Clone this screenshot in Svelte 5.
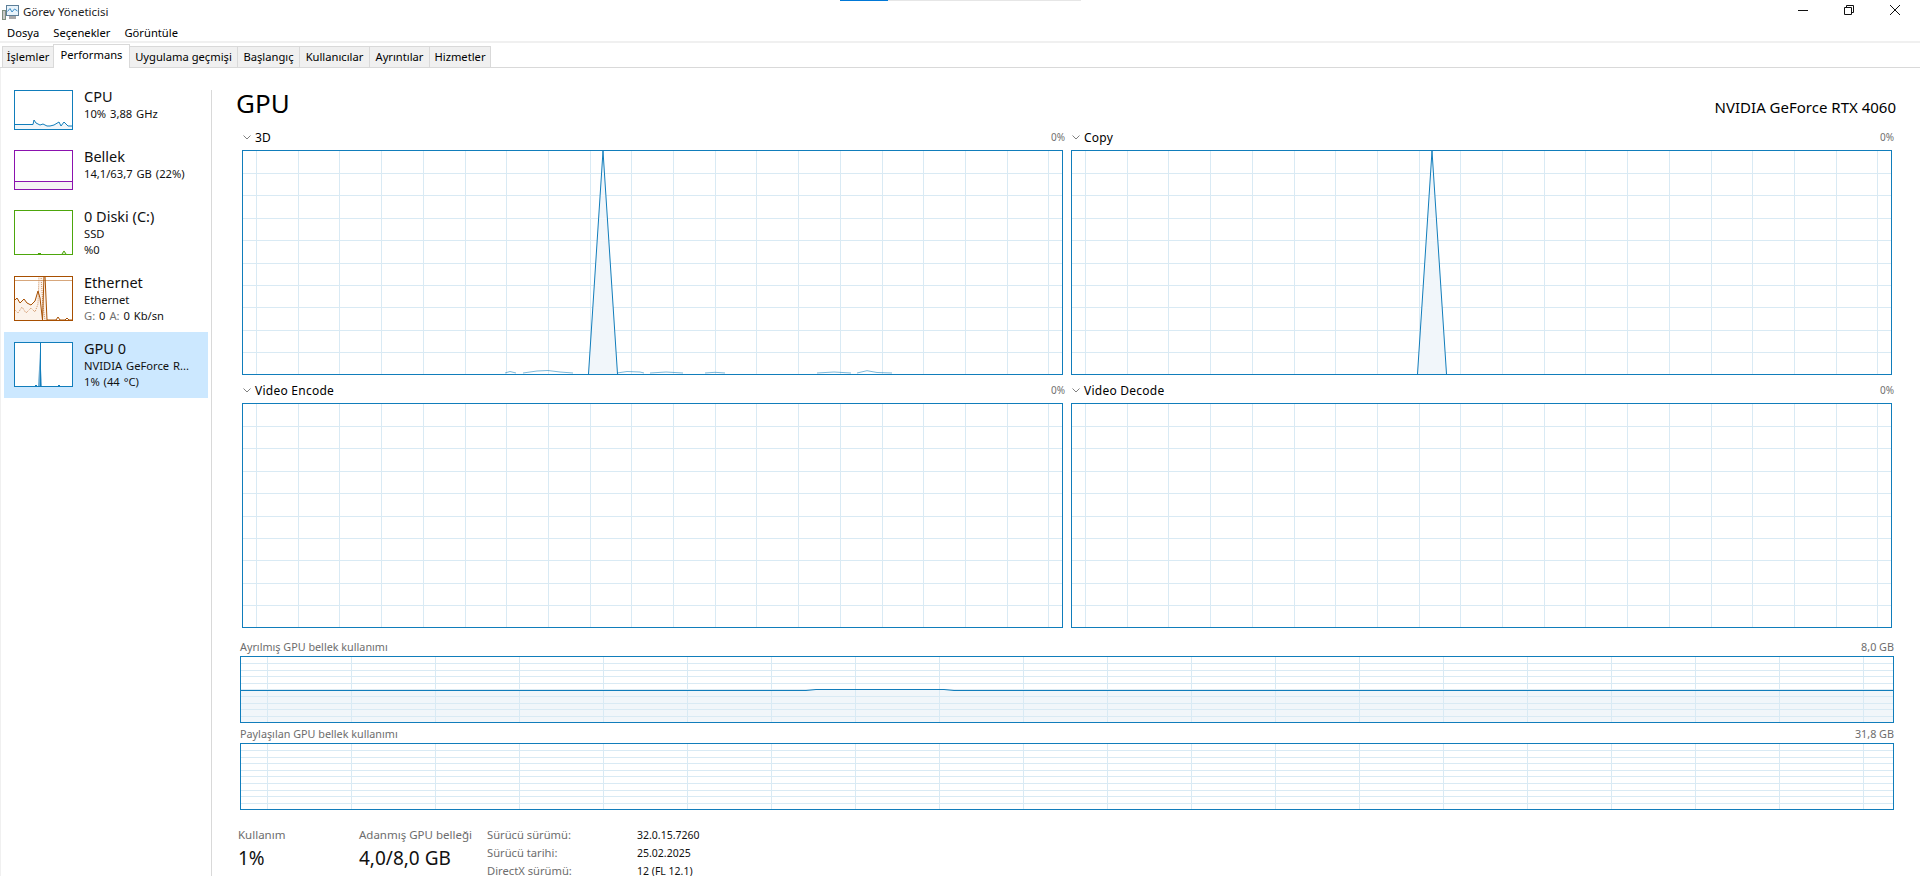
<script>
  const tabs = ['İşlemler', 'Performans', 'Uygulama geçmişi', 'Başlangıç', 'Kullanıcılar', 'Ayrıntılar', 'Hizmetler'];
  const range = (n, f) => Array.from({ length: n }, (_, i) => f(i));

  const spike3d = 'M263,223 L268,221.5 L274,223 M281,223 L295,221 L306,220.5 L318,222 L331,223 M375,223 L385,221.5 L398,222 L402,223 M408,223 L424,222 L441,223 M463,223 L473,222.3 L483,223 M575,223 L592,222 L609,223 M615,223 L625,220.7 L635,222.5 L650,223';
</script>

{#snippet bigChart(spike, fill)}
  <svg class="chart big" viewBox="0 0 821 225" preserveAspectRatio="none">
    {#each range(20, (i) => 14 + i * 41.7) as x}
      <line class="grid" x1={Math.round(x) + 0.5} x2={Math.round(x) + 0.5} y1="0" y2="225" />
    {/each}
    {#each range(9, (i) => 23 + i * 22.4) as y}
      <line class="grid" y1={Math.round(y) + 0.5} y2={Math.round(y) + 0.5} x1="0" x2="821" />
    {/each}
    {#if fill}
      <polygon class="area" points="346.5,224 361,1 375.5,224" />
      <polyline class="data" points="346.5,224 361,1 375.5,224" />
    {/if}
    {#if spike}
      <path class="data thin" d={spike} />
    {/if}
    <rect class="frame" x="0.5" y="0.5" width="820" height="224" />
  </svg>
{/snippet}

{#snippet smallChart(level)}
  <svg class="chart small" viewBox="0 0 1654 67" preserveAspectRatio="none">
    {#if level}
      <rect class="area" x="0" y={level} width="1654" height={67 - level} />
    {/if}
    {#each range(20, (i) => 28 + i * 84) as x}
      <line class="grid" x1={x - 0.5} x2={x - 0.5} y1="0" y2="67" />
    {/each}
    {#each range(9, (i) => 7 + i * 6.6) as y}
      <line class="grid" y1={Math.round(y) + 0.5} y2={Math.round(y) + 0.5} x1="0" x2="1654" />
    {/each}
    {#if level}
      <path class="data" d="M0,34.5 H566 L576,33.5 H704 L714,34.5 H1654" />
    {/if}
    <rect class="frame" x="0.5" y="0.5" width="1653" height="66" />
  </svg>
{/snippet}

{#snippet chevron()}
  <svg class="chev" viewBox="0 0 8 5"><path d="M0.5,0.5 L4,4 L7.5,0.5" /></svg>
{/snippet}

<div class="progress"><span class="done"></span><span class="rest"></span></div>

<div class="window">
  <header class="titlebar">
    <svg class="appicon" viewBox="0 0 17 16">
      <rect x="0.5" y="6.5" width="3" height="9" fill="#c9c9c9" stroke="#7f8f7f" />
      <rect x="4.5" y="1.5" width="12" height="10" fill="#e8f3fb" stroke="#5d7f99" />
      <path d="M5.5,7.5 L8,4.5 L10,8 L12.5,5 L15.5,7" fill="none" stroke="#3c8dc5" />
      <rect x="7" y="12" width="7" height="3" fill="#a8a8a8" />
    </svg>
    <span class="title">Görev Yöneticisi</span>
    <div class="winbtns">
      <svg viewBox="0 0 10 10"><path d="M0,5.5 H10" /></svg>
      <svg viewBox="0 0 10 10"><path d="M0.5,2.5 H7.5 V9.5 H0.5 Z M2.5,2.5 V0.5 H9.5 V7.5 H7.5" /></svg>
      <svg viewBox="0 0 10 10"><path d="M0,0 L10,10 M10,0 L0,10" /></svg>
    </div>
  </header>

  <nav class="menu">
    <span>Dosya</span><span>Seçenekler</span><span>Görüntüle</span>
  </nav>
  <div class="band"></div>

  <div class="tabs">
    {#each tabs as t, i}
      <span class="tab" class:active={i === 1}>{t}</span>
    {/each}
  </div>

  <main class="body">
    <aside class="side">
      <div class="item short">
        <svg class="thumb t40 blue" viewBox="0 0 59 40">
          <path class="tfill" d="M0,34 H19 L20,30 L22,33 L26,35 L29,34 L33,36 L36,36 L40,35 L45,32 L47,36 L50,32 L54,36 L59,36 V40 H0 Z" />
          <path class="tline" d="M0,34.5 H19 L20,30 L22,33 L26,35 L29,34 L33,36 L36,36 L40,35 L45,32 L47,36 L50,32 L54,36 L59,36" />
          <rect class="tframe" x="0.5" y="0.5" width="58" height="39" />
        </svg>
        <div class="info">
          <div class="name">CPU</div>
          <div class="sub">10% 3,88 GHz</div>
        </div>
      </div>

      <div class="item short">
        <svg class="thumb t40 purple" viewBox="0 0 59 40">
          <rect class="tfill" x="0" y="31" width="59" height="9" />
          <path class="tline" d="M0,31.5 H59" />
          <rect class="tframe" x="0.5" y="0.5" width="58" height="39" />
        </svg>
        <div class="info">
          <div class="name">Bellek</div>
          <div class="sub">14,1/63,7 GB (22%)</div>
        </div>
      </div>

      <div class="item">
        <svg class="thumb green" viewBox="0 0 59 45">
          <path class="tfill" d="M23,44 L25,43 L27,44 Z M48,44 L50,40 L52,44 Z" />
          <path class="tline" d="M24,43.5 H27 M48,44 L50,41 L52,44" />
          <rect class="tframe" x="0.5" y="0.5" width="58" height="44" />
        </svg>
        <div class="info">
          <div class="name">0 Diski (C:)</div>
          <div class="sub">SSD</div>
          <div class="sub">%0</div>
        </div>
      </div>

      <div class="item eth">
        <svg class="thumb orange" viewBox="0 0 59 45">
          <path class="tfill" d="M0,25 L3,22 L6,27 L10,23 L13,27 L17,29 L21,25 L24,15 L26,0 L30,0 L33,44 H59 V45 H0 Z" />
          <path class="tline faint" d="M0,4.5 H59" />
          <path class="tline dots" d="M0,33 L4,37 L8,31 L12,37 L17,32 L21,36 L24,28 L25,0 M27,0 L29,30 L31,44" />
          <path class="tline" d="M0,25 L3,22 L6,27 L10,23 L13,27 L17,29 L21,25 L24,15 L26,22 L28.5,44 L30,0 M31,0 L33,44 H42 L44,41 L46,44 H51 L53,42 L55,44 H59" />
          <rect class="tframe" x="0.5" y="0.5" width="58" height="44" />
        </svg>
        <div class="info">
          <div class="name">Ethernet</div>
          <div class="sub">Ethernet</div>
          <div class="sub"><span class="mute">G:</span> 0 <span class="mute">A:</span> 0 Kb/sn</div>
        </div>
      </div>

      <div class="item selected">
        <svg class="thumb blue white" viewBox="0 0 59 45">
          <path class="tfill dark" d="M24,44 L26,9 L28,44 Z" />
          <path class="tline" d="M26.5,0 V45 M21,43.5 H23 M44,43.5 H46" />
          <rect class="tframe" x="0.5" y="0.5" width="58" height="44" />
        </svg>
        <div class="info">
          <div class="name">GPU 0</div>
          <div class="sub">NVIDIA GeForce R...</div>
          <div class="sub">1% (44 °C)</div>
        </div>
      </div>
    </aside>

    <section class="content">
      <div class="head">
        <h1>GPU</h1>
        <span class="model">NVIDIA GeForce RTX 4060</span>
      </div>

      <div class="bigs">
        <div class="cell">
          <div class="label">{@render chevron()}<span>3D</span><em>0%</em></div>
          {@render bigChart(spike3d, true)}
        </div>
        <div class="cell">
          <div class="label">{@render chevron()}<span>Copy</span><em>0%</em></div>
          {@render bigChart('', true)}
        </div>
        <div class="cell">
          <div class="label">{@render chevron()}<span>Video Encode</span><em>0%</em></div>
          {@render bigChart('', false)}
        </div>
        <div class="cell">
          <div class="label">{@render chevron()}<span>Video Decode</span><em>0%</em></div>
          {@render bigChart('', false)}
        </div>
      </div>

      <div class="mem">
        <div class="memlabel"><span>Ayrılmış GPU bellek kullanımı</span><span>8,0 GB</span></div>
        {@render smallChart(34)}
        <div class="memlabel"><span>Paylaşılan GPU bellek kullanımı</span><span>31,8 GB</span></div>
        {@render smallChart(0)}
      </div>

      <div class="stats">
        <div class="stat s1"><div class="k">Kullanım</div><div class="v">1%</div></div>
        <div class="stat s2"><div class="k">Adanmış GPU belleği</div><div class="v">4,0/8,0 GB</div></div>
        <dl class="driver">
          <dt>Sürücü sürümü:</dt><dd>32.0.15.7260</dd>
          <dt>Sürücü tarihi:</dt><dd>25.02.2025</dd>
          <dt>DirectX sürümü:</dt><dd>12 (FL 12.1)</dd>
        </dl>
      </div>
    </section>
  </main>
</div>

<style>
  :global(body) {
    margin: 0;
    background: #fff;
    overflow: hidden;
  }
  .window {
    width: 1920px;
    height: 876px;
    overflow: hidden;
    font-family: "Noto Sans", "Open Sans", sans-serif;
    font-size: 11.2px;
    color: #000;
    background: #fff;
    display: flex;
    flex-direction: column;
  }
  .progress {
    position: absolute;
    left: 840px;
    top: 0;
    display: flex;
    height: 1px;
  }
  .done { width: 48px; background: #0078d7; }
  .rest { width: 193px; background: #e6e6e6; }

  .titlebar {
    height: 23px;
    display: flex;
    align-items: center;
    padding-left: 2px;
    flex: none;
  }
  .appicon { width: 17px; height: 16px; margin-right: 4px; }
  .title { font-size: 11.5px; color: #222; }
  .winbtns {
    margin-left: auto;
    display: flex;
    gap: 36px;
    padding-right: 20px;
    margin-top: -3px;
  }
  .winbtns svg { width: 10px; height: 10px; overflow: visible; }
  .winbtns path { fill: none; stroke: #111; stroke-width: 1; }

  .menu {
    height: 18px;
    display: flex;
    gap: 14px;
    align-items: center;
    padding-left: 7px;
    flex: none;
  }
  .band { height: 2px; background: #f0f0f0; flex: none; }

  .tabs {
    height: 24px;
    flex: none;
    display: grid;
    grid-template-columns: 51px 76px 108px 62px 70px 60px 61px;
    justify-content: start;
    align-items: end;
    padding-left: 2px;
    border-bottom: 1px solid #d9d9d9;
    box-sizing: content-box;
  }
  .tab {
    height: 20px;
    line-height: 19px;
    text-align: center;
    background: #f0f0f0;
    border: 1px solid #d9d9d9;
    border-bottom: 0;
    margin-right: -1px;
    white-space: nowrap;
  }
  .tab.active {
    height: 23px;
    line-height: 20px;
    background: #fff;
    margin-bottom: -1px;
    position: relative;
  }

  .body {
    flex: 1;
    display: flex;
    min-height: 0;
    border-left: 1px solid #f0f0f0;
  }
  .side {
    width: 208px;
    padding-left: 3px;
    padding-top: 22px;
    flex: none;
    position: relative;
    box-sizing: content-box;
  }
  .side::after {
    content: '';
    position: absolute;
    right: 0;
    top: 22px;
    bottom: 0;
    width: 1px;
    background: #d9d9d9;
  }
  .item {
    display: flex;
    height: 66px;
    align-items: flex-start;
    padding-left: 10px;
    box-sizing: border-box;
    width: 204px;
  }
  .item.short { height: 60px; }
  .item.eth { height: 56px; }
  .item.selected { background: #cce8ff; padding-top: 10px; }
  .thumb { width: 59px; height: 45px; flex: none; display: block; }
  .thumb.t40 { height: 40px; }
  .tframe { fill: none; stroke-width: 1; }
  .tline { fill: none; stroke-width: 1; }
  .blue .tframe, .blue .tline { stroke: #117dbb; }
  .blue .tfill { fill: #f1f6fa; }
  .blue.white { background: #fff; }
  .blue .tfill.dark { fill: #6aa9d0; }
  .purple .tframe, .purple .tline { stroke: #8b12ae; }
  .purple .tfill { fill: #f4f2f4; }
  .green .tframe, .green .tline { stroke: #4da60c; }
  .green .tfill { fill: #dceccf; }
  .orange .tframe, .orange .tline { stroke: #a74f01; }
  .orange .tfill { fill: #fcf3eb; }
  .orange .faint { stroke: #d7a77c; }
  .orange .dots { stroke: #cf9161; stroke-dasharray: 1 1; }

  .info { margin-left: 11px; margin-top: -4px; }
  .name { font-size: 14.5px; line-height: 20px; color: #111; }
  .sub { font-size: 11.2px; line-height: 15.5px; color: #111; word-spacing: 1px; }
  .mute { color: #707070; }

  .content {
    flex: 1;
    min-width: 0;
    padding-left: 28px;
  }
  .head {
    width: 1660px;
    padding-top: 20px;
    height: 30px;
    display: flex;
    justify-content: space-between;
    align-items: center;
    margin-left: -4px;
  }
  h1 {
    margin: 0;
    font-weight: 400;
    font-size: 26px;
    line-height: 30px;
  }
  .model { font-size: 15px; margin-top: 7px; }

  .bigs {
    display: grid;
    grid-template-columns: 821px 821px;
    column-gap: 8px;
    margin-left: 2px;
    margin-top: 6px;
  }
  .cell { height: 253px; min-width: 0; }
  .label {
    height: 26px;
    display: flex;
    align-items: center;
    gap: 3px;
    padding-left: 1px;
    margin-right: -2px;
    font-size: 12px;
    letter-spacing: 0.25px;
  }
  .label em {
    margin-left: auto;
    font-style: normal;
    font-size: 10px;
    letter-spacing: 0;
    color: #707070;
  }
  .chev { width: 8px; height: 5px; margin-right: 1px; }
  .chev path { fill: none; stroke: #808080; }

  .chart { display: block; }
  .big { width: 821px; height: 225px; }
  .small { width: 1654px; height: 67px; }
  .grid { stroke: #d9eaf4; stroke-width: 1; }
  .area { fill: #f1f6fa; stroke: none; }
  .data { fill: none; stroke: #117dbb; stroke-width: 1; }
  .data.thin { stroke-width: 1; opacity: .55; }
  .frame { fill: none; stroke: #117dbb; stroke-width: 1; }

  .mem { margin-top: 6px; width: 1654px; }
  .memlabel {
    height: 20px;
    display: flex;
    justify-content: space-between;
    align-items: center;
    font-size: 10.8px;
    color: #6d6d6d;
    box-sizing: border-box;
  }

  .stats {
    display: flex;
    margin-top: 16px;
    margin-left: -2px;
  }
  .stat { flex: none; }
  .s1 { width: 121px; }
  .s2 { width: 128px; }
  .k { font-size: 11.5px; line-height: 18px; color: #6d6d6d; }
  .v { font-size: 19px; line-height: 26px; color: #111; margin-top: 1px; }
  .driver {
    margin: 0;
    display: grid;
    grid-template-columns: 150px auto;
    grid-auto-rows: 18px;
    align-items: center;
    font-size: 10.5px;
    line-height: 12px;
  }
  dt { color: #6d6d6d; font-size: 11.2px; }
  dd { margin: 0; color: #111; }
</style>
